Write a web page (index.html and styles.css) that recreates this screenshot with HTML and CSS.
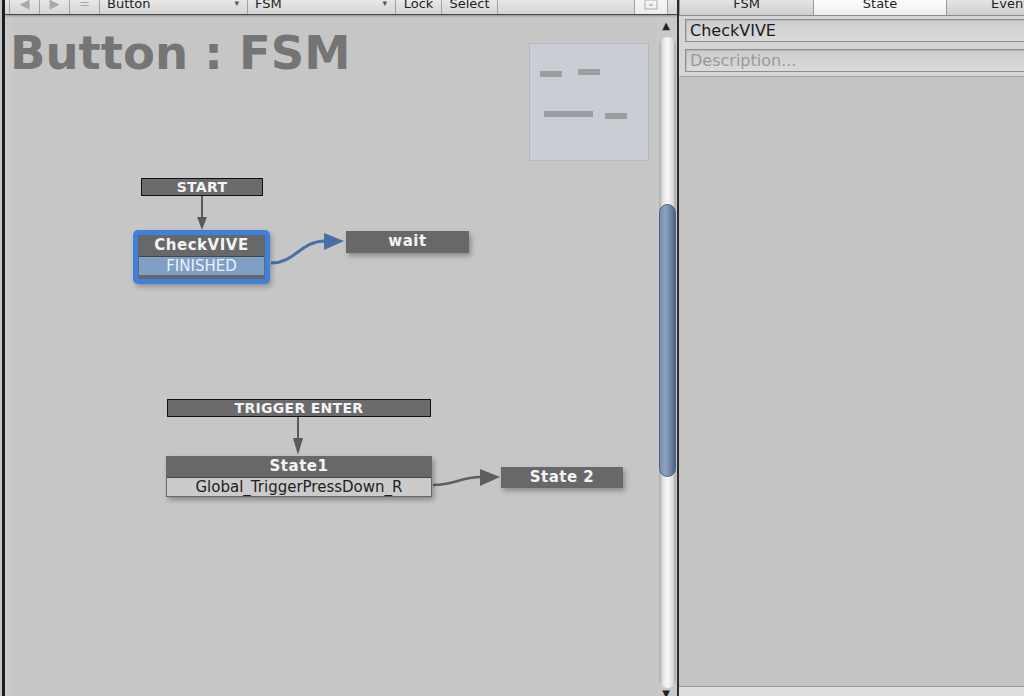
FILE: index.html
```html
<!DOCTYPE html>
<html lang="en">

<head>
  <meta charset="UTF-8">
  <title>Button : FSM</title>
  <link rel="stylesheet" href="styles.css">
</head>

<body>
  <div class="fsm-panel">
    <div class="toolbar">
      <div class="tool-gap"></div>
      <div class="tool-btn glyph">&#9664;</div>
      <div class="tool-btn glyph">&#9654;</div>
      <div class="tool-btn glyph">=</div>
      <div class="tool-select">Button<span class="caret">&#9662;</span></div>
      <div class="tool-select">FSM<span class="caret">&#9662;</span></div>
      <div class="tool-btn lock">Lock</div>
      <div class="tool-btn select">Select</div>
      <div class="tool-fill"></div>
      <div class="tool-icon">
        <svg width="14" height="10" viewBox="0 0 14 10">
          <rect x="1" y="0" width="12" height="9" fill="none" stroke="#c4c4c4" stroke-width="1.5" />
          <rect x="5" y="4" width="4" height="2" fill="#c4c4c4" />
        </svg>
      </div>
      <div class="tool-end"></div>
    </div>

    <div class="fsm-body">
      <div class="graph">
        <h1 class="graph-title">Button : FSM</h1>

        <div class="minimap">
          <div class="mini-node mini-a"></div>
          <div class="mini-node mini-b"></div>
          <div class="mini-node mini-c"></div>
          <div class="mini-node mini-d"></div>
        </div>

        <svg class="links" width="652" height="680" viewBox="0 0 652 680">
          <!-- start events -->
          <line x1="197" y1="181" x2="197" y2="203" stroke="#5a5a5a" stroke-width="2" />
          <polygon points="192,202 202,202 197,215" fill="#5a5a5a" />
          <line x1="293" y1="402" x2="293" y2="426" stroke="#5a5a5a" stroke-width="2" />
          <polygon points="288,423 298,423 293,440" fill="#5a5a5a" />
          <!-- transitions -->
          <path d="M266,248 C290,248 296,226 320,226" fill="none" stroke="#4a6fa6" stroke-width="3" />
          <polygon points="319,218 319,235 339,226" fill="#4a6fa6" />
          <path d="M428,470 C450,470 455,462 476,462" fill="none" stroke="#5e5e5e" stroke-width="2.5" />
          <polygon points="475,454 475,471 495,462" fill="#5e5e5e" />
        </svg>

        <div class="event at-start">START</div>

        <div class="selected-frame at-check">
          <div class="state">
            <div class="state-name">CheckVIVE</div>
            <div class="state-event active">FINISHED</div>
            <div class="state-foot"></div>
          </div>
        </div>

        <div class="state node at-wait">
          <div class="state-name">wait</div>
        </div>

        <div class="event at-trigger">TRIGGER ENTER</div>

        <div class="state node at-state1">
          <div class="state-name">State1</div>
          <div class="state-event">Global_TriggerPressDown_R</div>
        </div>

        <div class="state node at-state2">
          <div class="state-name short">State 2</div>
        </div>
      </div>

      <div class="scrollbar">
        <div class="scroll-up">&#9650;</div>
        <div class="scroll-track">
          <div class="scroll-thumb"></div>
        </div>
        <div class="scroll-down">&#9660;</div>
      </div>
    </div>
  </div>

  <div class="inspector">
    <div class="tabs">
      <div class="tab">FSM</div>
      <div class="tab current">State</div>
      <div class="tab">Events</div>
    </div>
    <div class="inspector-head">
      <div class="field">CheckVIVE</div>
      <div class="field placeholder">Description...</div>
    </div>
    <div class="inspector-body"></div>
    <div class="inspector-foot"></div>
  </div>
</body>

</html>
```

FILE: styles.css
```css
* {
  margin: 0;
  padding: 0;
  box-sizing: border-box;
}

body {
  width: 1024px;
  height: 696px;
  overflow: hidden;
  display: flex;
  background-color: #c4c4c4;
  font-family: 'DejaVu Sans', Verdana, sans-serif;
  color: #1e1e1e;
}

/* left: graph view */

.fsm-panel {
  width: 677px;
  margin-left: 2px;
  border-left: 3px solid #1d1d1d;
  border-right: 2px solid #2c2c2c;
  display: flex;
  flex-direction: column;
}

.toolbar {
  height: 15px;
  display: flex;
  background: linear-gradient(#e8e8e8, #d3d3d3);
  border-bottom: 1px solid #4a4a4a;
  box-shadow: 0 1px 2px rgba(0, 0, 0, 0.3);
  font-size: 13px;
  line-height: 7px;
  position: relative;
  z-index: 2;
}

.toolbar > div {
  flex-shrink: 0;
  border-right: 1px solid #a2a2a2;
}

.tool-gap {
  width: 5px;
}

.tool-btn {
  width: 30px;
  text-align: center;
}

.tool-btn.glyph {
  color: #a9a9a9;
  font-size: 13px;
}

.tool-btn.lock {
  width: 46px;
}

.tool-btn.select {
  width: 56px;
}

.tool-select {
  width: 148px;
  padding-left: 7px;
  display: flex;
  justify-content: space-between;
}

.caret {
  font-size: 9px;
  color: #555;
  padding-right: 8px;
}

.tool-fill {
  flex: 1;
  flex-shrink: 1 !important;
}

.tool-icon {
  width: 33px;
  background: linear-gradient(#f6f6f6, #ececec);
  display: flex;
  justify-content: center;
  align-items: flex-start;
}

.tool-end {
  width: 9px;
  border-right: none !important;
}

.fsm-body {
  flex: 1;
  display: flex;
  min-height: 0;
}

.graph {
  width: 652px;
  position: relative;
  overflow: hidden;
  background: linear-gradient(to right, #cbcbcb, #c6c6c6 12px, #c6c6c6);
  padding: 15px 0 0 5px;
}

.graph-title {
  font-size: 46.5px;
  line-height: 46px;
  font-weight: 700;
  color: #757575;
}

.minimap {
  position: absolute;
  left: 524px;
  top: 28px;
  width: 120px;
  height: 118px;
  background-color: #cacdd3;
  border: 1px solid #b6b9be;
}

.mini-node {
  position: absolute;
  height: 6px;
  width: 22px;
  background-color: #9b9da1;
}

.mini-a { left: 10px; top: 27px; }
.mini-b { left: 48px; top: 25px; }
.mini-c { left: 14px; top: 67px; width: 49px; }
.mini-d { left: 75px; top: 69px; }

.links {
  position: absolute;
  left: 0;
  top: 0;
}

.event {
  position: absolute;
  height: 18px;
  background-color: #6b6b6b;
  border: 1px solid #111;
  color: #f4f4f4;
  font-size: 14px;
  font-weight: 700;
  line-height: 17px;
  text-align: center;
  letter-spacing: 0.3px;
}

.at-start { left: 136px; top: 163px; width: 122px; }
.at-trigger { left: 162px; top: 384px; width: 264px; }

.state {
  background-color: #686868;
  color: #f4f4f4;
  padding: 0 1px;
}

.node {
  position: absolute;
  box-shadow: 2px 3px 5px rgba(0, 0, 0, 0.3);
}

.state-name {
  height: 21px;
  font-size: 15px;
  font-weight: 700;
  line-height: 21px;
  text-align: center;
  letter-spacing: 0.5px;
}

.state-event {
  height: 19px;
  border-top: 1px solid #444;
  background-color: #cbcbcb;
  color: #1e1e1e;
  font-size: 15px;
  line-height: 18px;
  text-align: center;
}

.state-event.active {
  background-color: #7f9fc6;
  color: #e8f1fb;
}

.state-foot {
  height: 4px;
}

.selected-frame {
  position: absolute;
  padding: 5px;
  background-color: #3f80dc;
  border-radius: 5px;
  box-shadow: 2px 3px 5px rgba(0, 0, 0, 0.25);
}

.at-check { left: 128px; top: 215px; width: 137px; }
.at-wait { left: 341px; top: 216px; width: 123px; }
.at-wait .state-name { height: 22px; line-height: 20px; }
.at-state1 { left: 161px; top: 441px; width: 266px; padding-bottom: 1px; }
.at-state2 { left: 496px; top: 452px; width: 122px; }

/* scrollbar */

.scrollbar {
  width: 20px;
  display: flex;
  flex-direction: column;
  background-color: #c9c9c9;
}

.scroll-up,
.scroll-down {
  height: 22px;
  font-size: 10px;
  line-height: 22px;
  text-align: center;
  color: #222;
  padding-right: 2px;
}

.scroll-down {
  height: 8px;
  line-height: 12px;
}

.scroll-track {
  flex: 1;
  margin: 0 1px 0 2px;
  padding-top: 167px;
  border-radius: 9px;
  background: linear-gradient(to right, #a9a9a9, #e6e6e6 25%, #f7f7f7 50%, #dedede 80%, #a5a5a5);
}

.scroll-thumb {
  height: 273px;
  border-radius: 9px;
  border: 1px solid #4c5e7a;
  background: linear-gradient(to right, #7a8fae, #8ea3c2 35%, #6f86a7 70%, #4d6282);
}

/* right: inspector */

.inspector {
  flex: 1;
  display: flex;
  flex-direction: column;
  overflow: hidden;
  background-color: #c3c3c3;
}

.tabs {
  height: 16px;
  display: flex;
  background: linear-gradient(#e4e4e4, #cfcfcf);
  border-bottom: 1px solid #8c8c8c;
  font-size: 13px;
  line-height: 7px;
}

.tab {
  width: 133px;
  flex-shrink: 0;
  border-left: 1px solid #9c9c9c;
  text-align: center;
}

.tab:first-child {
  width: 134px;
}

.tab.current {
  background: linear-gradient(#fcfcfc, #eeeeee);
}

.inspector-head {
  display: flex;
  flex-direction: column;
  gap: 7px;
  padding: 3px 0 4px 6px;
  background-color: #d5d5d5;
  border-bottom: 1px solid #a6a6a6;
}

.field {
  height: 23px;
  margin-right: -8px;
  padding-left: 4px;
  border: 1px solid #8e8e8e;
  background: linear-gradient(#cdcdcd, #dadada);
  box-shadow: inset 1px 1px 1px rgba(0, 0, 0, 0.12);
  font-size: 16px;
  line-height: 21px;
  color: #1a1a1a;
}

.field.placeholder {
  color: #9a9a9a;
}

.inspector-body {
  flex: 1;
}

.inspector-foot {
  height: 10px;
  border-top: 1px solid #9a9a9a;
  background-color: #dedede;
}
```
